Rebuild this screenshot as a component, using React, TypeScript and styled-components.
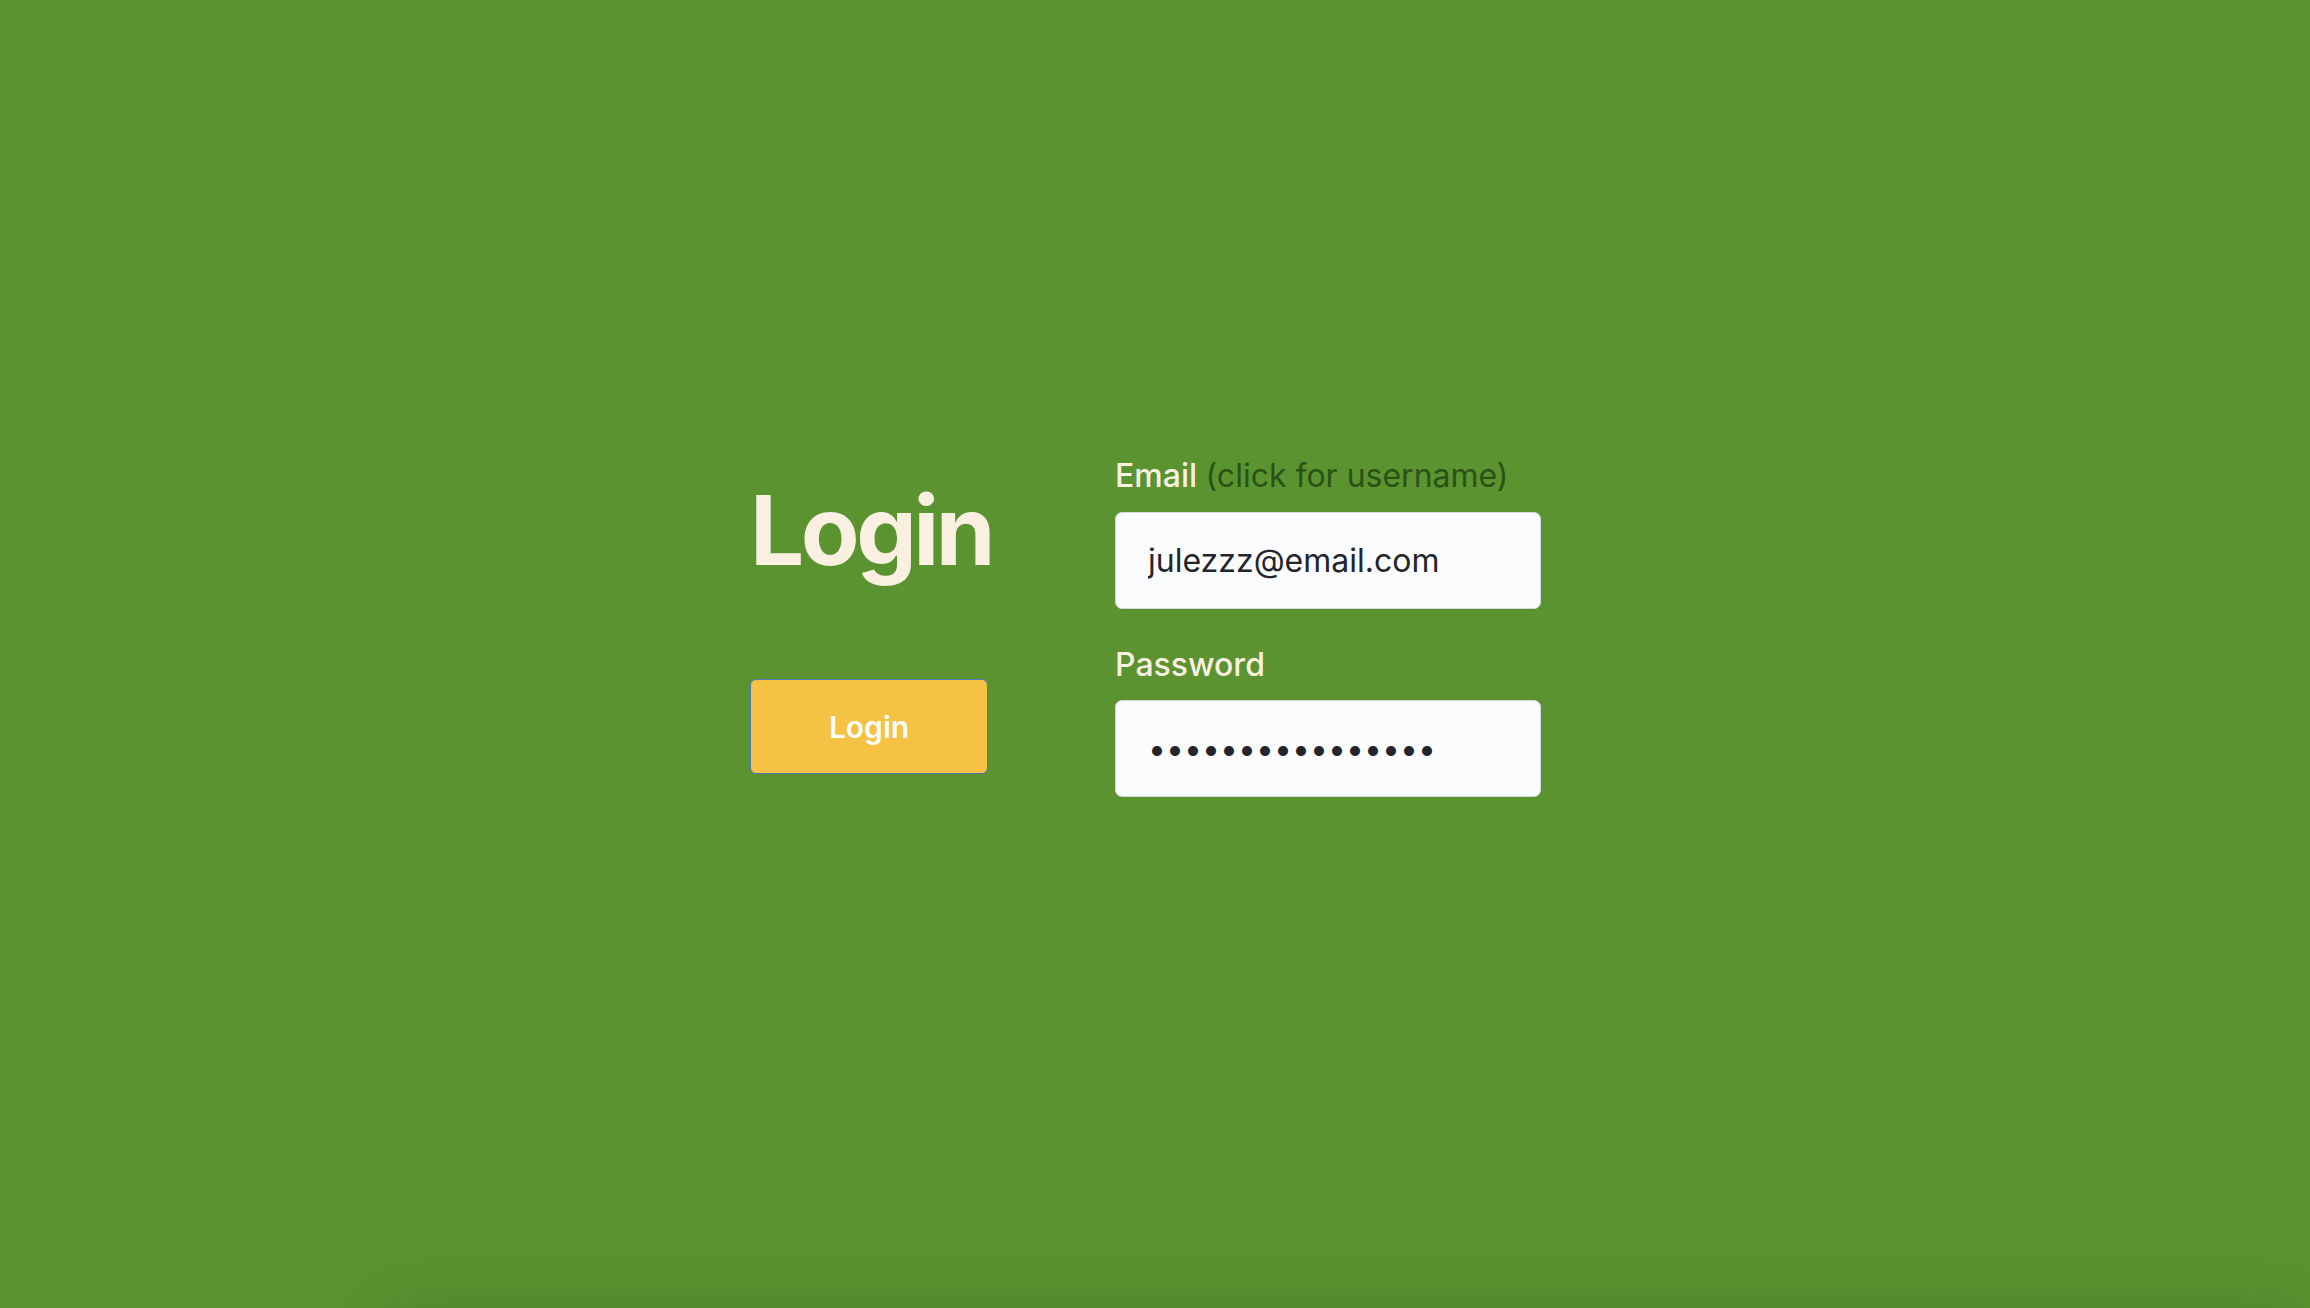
import React from "react";
import styled, { createGlobalStyle } from "styled-components";

const GlobalStyle = createGlobalStyle`
  html, body {
    margin: 0;
    padding: 0;
    background: #5a9330;
  }
  * {
    box-sizing: border-box;
  }
`;

const Page = styled.main`
  min-height: 100vh;
  display: flex;
  align-items: center;
  justify-content: center;
  padding: 0 19px 54px 0;
  font-family: Inter, "Noto Sans", sans-serif;
  background: #5a9330;
`;

const LoginForm = styled.form`
  display: grid;
  grid-template-columns: 238px 426px;
  column-gap: 127px;
  align-items: start;
`;

const Side = styled.div`
  display: flex;
  flex-direction: column;
  padding-top: 25px;
`;

const Heading = styled.h1`
  margin: 0;
  font-size: 96px;
  line-height: 1;
  font-weight: 700;
  letter-spacing: -3.5px;
  color: #faf0e1;
  text-align: center;
`;

const SubmitButton = styled.button`
  margin-top: 101px;
  height: 95px;
  width: 100%;
  border: 1px solid #4a78b8;
  border-radius: 6px;
  background: #f6c244;
  color: #ffffff;
  font-family: inherit;
  font-size: 30px;
  font-weight: 600;
  cursor: pointer;
`;

const Fields = styled.div`
  display: flex;
  flex-direction: column;
`;

const Field = styled.label<{ $gapTop?: number }>`
  display: flex;
  flex-direction: column;
  gap: 16px;
  margin-top: ${(p) => p.$gapTop ?? 0}px;
`;

const LabelText = styled.span`
  font-size: 32px;
  line-height: 1.2;
  font-weight: 500;
  color: #faf0e1;
`;

const Hint = styled.span`
  font-weight: 400;
  color: #2a5214;
  cursor: pointer;
`;

const TextInput = styled.input`
  height: 97px;
  width: 100%;
  padding: 0 32px;
  border: 1px solid #d5d9e0;
  border-radius: 7px;
  background: #fbfcfd;
  color: #24252c;
  font-family: inherit;
  font-size: 32px;
  outline: none;
`;

const Footer = styled.div`
  height: 120px;
  margin-left: 380px;
  background: #5a9330;
  box-shadow: 0 0 70px rgba(0, 0, 0, 0.12);
`;

export default function App() {
  return (
    <>
      <GlobalStyle />
      <Page>
        <LoginForm onSubmit={(e) => e.preventDefault()}>
          <Side>
            <Heading>Login</Heading>
            <SubmitButton type="submit">Login</SubmitButton>
          </Side>
          <Fields>
            <Field>
              <LabelText>
                Email <Hint>(click for username)</Hint>
              </LabelText>
              <TextInput type="text" defaultValue="julezzz@email.com" readOnly />
            </Field>
            <Field $gapTop={37}>
              <LabelText>Password</LabelText>
              <TextInput type="password" defaultValue="supersecretpass1" readOnly />
            </Field>
          </Fields>
        </LoginForm>
      </Page>
      <Footer />
    </>
  );
}
